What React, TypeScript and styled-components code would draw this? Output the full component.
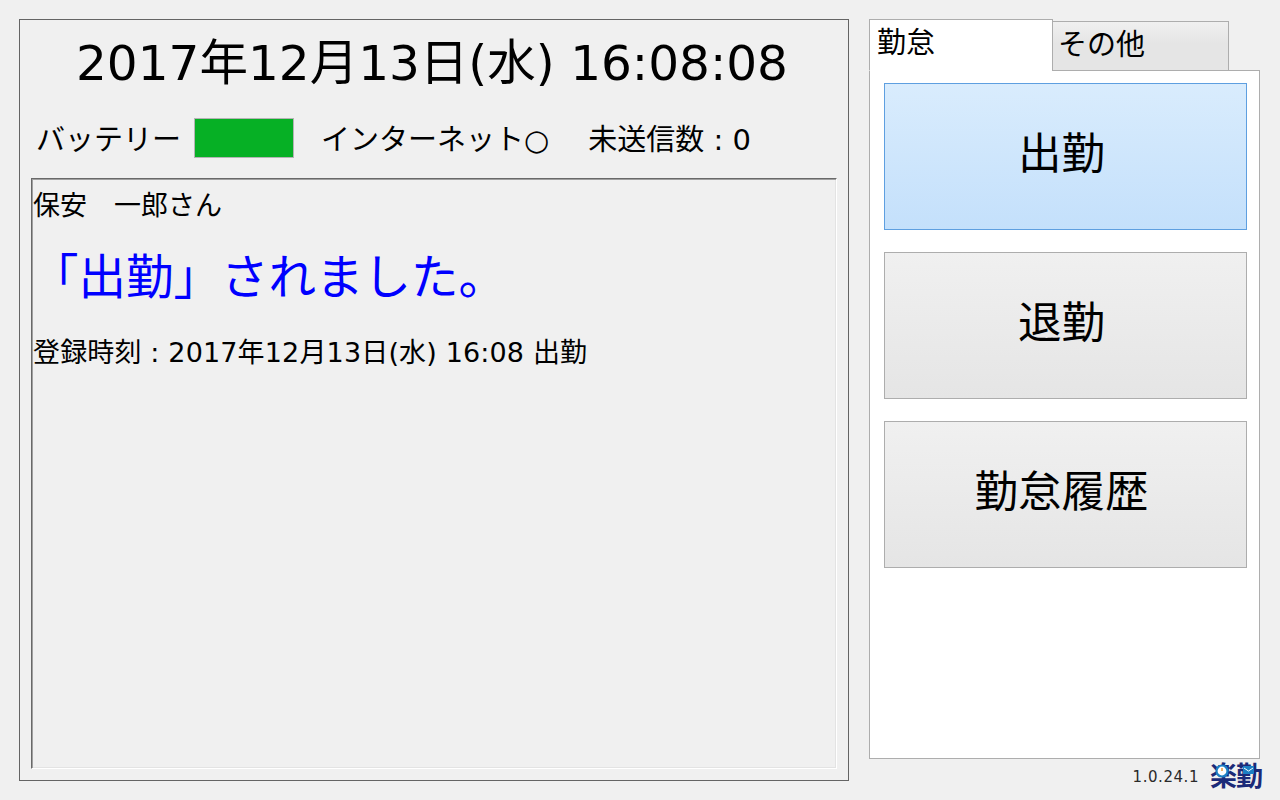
import React from 'react'
import styled, { createGlobalStyle } from 'styled-components'

const GlobalStyle = createGlobalStyle`
  html, body {
    margin: 0;
    padding: 0;
    background: #f0f0f0;
  }
  body {
    font-family: "DejaVu Sans", "Noto Sans CJK JP", sans-serif;
    color: #000;
  }
`

const Screen = styled.div`
  width: 1280px;
  height: 800px;
  box-sizing: border-box;
  padding: 19px 20px 0 19px;
  display: flex;
  gap: 20px;
  overflow: hidden;
`

const LeftPanel = styled.section`
  width: 830px;
  height: 762px;
  box-sizing: border-box;
  border: 1px solid #646464;
  padding: 0 11px 11px;
  display: flex;
  flex-direction: column;
`

const Clock = styled.div`
  height: 86px;
  padding-right: 4px;
  font-size: 48.5px;
  line-height: 86px;
  text-align: center;
  white-space: nowrap;
`

const StatusRow = styled.div`
  height: 72px;
  box-sizing: border-box;
  padding: 0 0 8px 5px;
  display: flex;
  align-items: center;
  font-size: 29px;
  white-space: nowrap;
`

const StatusLabel = styled.span<{ $gap?: number }>`
  margin-left: ${p => p.$gap ?? 0}px;
  margin-top: 4px;
  line-height: 40px;
`

const Battery = styled.div`
  width: 100px;
  height: 40px;
  margin-left: 13px;
  box-sizing: border-box;
  border: 1px solid #b4b4b4;
  background: #06b025;
`

const LogBox = styled.div`
  flex: 1;
  box-sizing: border-box;
  border: 1px solid;
  border-color: #696969 #fff #fff #696969;
  box-shadow: inset 1px 1px 0 #a0a0a0, inset -1px -1px 0 #e3e3e3;
  padding: 0 0 0 1px;
`

const Person = styled.div`
  font-size: 27px;
  line-height: 54px;
`

const Message = styled.div`
  color: #0000ff;
  font-size: 47.5px;
  line-height: 64px;
  margin-top: 13px;
  margin-left: -2px;
`

const Entry = styled.div`
  font-size: 27px;
  letter-spacing: 0.15px;
  line-height: 40px;
  margin-top: 23px;
`

const RightColumn = styled.div`
  width: 391px;
  display: flex;
  flex-direction: column;
`

const TabBar = styled.div`
  height: 51px;
  display: flex;
  align-items: flex-end;
  position: relative;
  z-index: 1;
`

const Tab = styled.div<{ $active?: boolean }>`
  box-sizing: border-box;
  width: ${p => (p.$active ? 184 : 177)}px;
  height: ${p => (p.$active ? 52 : 50)}px;
  margin-bottom: -1px;
  margin-left: ${p => (p.$active ? 0 : -1)}px;
  border: 1px solid #adadad;
  border-bottom-color: ${p => (p.$active ? '#fff' : '#adadad')};
  background: ${p => (p.$active ? '#fff' : 'linear-gradient(#f0f0f0, #e5e5e5 45%)')};
  padding-left: ${p => (p.$active ? 7 : 5)}px;
  font-size: 29px;
  line-height: ${p => (p.$active ? 46 : 47)}px;
`

const TabPanel = styled.div`
  width: 391px;
  height: 689px;
  box-sizing: border-box;
  background: #fff;
  border: 1px solid #adadad;
  padding: 12px 12px 0 14px;
  display: flex;
  flex-direction: column;
  gap: 22px;
`

const ActionButton = styled.button<{ $active?: boolean }>`
  width: 363px;
  height: 147px;
  padding: 0 8px 12px 0;
  flex: none;
  border: 1px solid ${p => (p.$active ? '#5e9fe0' : '#adadad')};
  background: ${p =>
    p.$active ? 'linear-gradient(#d9ecfd, #c4e0fb)' : 'linear-gradient(#f0f0f0, #e5e5e5)'};
  color: #000;
  font-family: inherit;
  font-size: 43.5px;
`

const Footer = styled.div`
  height: 35px;
  display: flex;
  align-items: center;
  justify-content: flex-end;
  gap: 11px;
  margin-right: -3px;
`

const Version = styled.span`
  font-size: 15px;
  letter-spacing: 0.55px;
  color: #2a2a2a;
`

const Logo = styled.div`
  position: relative;
  width: 53px;
  color: #1b2a78;
  font-size: 27px;
  font-weight: 700;
  line-height: 27px;
  letter-spacing: -1px;
  white-space: nowrap;
`

const LogoMark = styled.svg`
  position: absolute;
  left: 0;
  top: 0;
`

export default function App() {
  return (
    <Screen>
      <GlobalStyle />
      <LeftPanel>
        <Clock>2017年12月13日(水) 16:08:08</Clock>
        <StatusRow>
          <StatusLabel>バッテリー</StatusLabel>
          <Battery />
          <StatusLabel $gap={27}>インターネット○</StatusLabel>
          <StatusLabel $gap={39}>未送信数 : 0</StatusLabel>
        </StatusRow>
        <LogBox>
          <Person>保安　一郎さん</Person>
          <Message>「出勤」されました。</Message>
          <Entry>登録時刻 : 2017年12月13日(水) 16:08 出勤</Entry>
        </LogBox>
      </LeftPanel>
      <RightColumn>
        <TabBar>
          <Tab $active>勤怠</Tab>
          <Tab>その他</Tab>
        </TabBar>
        <TabPanel>
          <ActionButton $active>出勤</ActionButton>
          <ActionButton>退勤</ActionButton>
          <ActionButton>勤怠履歴</ActionButton>
        </TabPanel>
        <Footer>
          <Version>1.0.24.1</Version>
          <Logo>
            楽勤
            <LogoMark width="53" height="27" viewBox="0 0 53 27">
              <circle cx="12" cy="8" r="5.5" fill="#fff" stroke="#1c7fc4" strokeWidth="2.2" />
              <path d="M12 5v3" stroke="#e8962e" strokeWidth="1.4" fill="none" />
              <rect x="33" y="3" width="11" height="8" fill="#1c7fc4" />
              <path d="M34 5l4.5 3L43 5" stroke="#fff" strokeWidth="1" fill="none" />
            </LogoMark>
          </Logo>
        </Footer>
      </RightColumn>
    </Screen>
  )
}
